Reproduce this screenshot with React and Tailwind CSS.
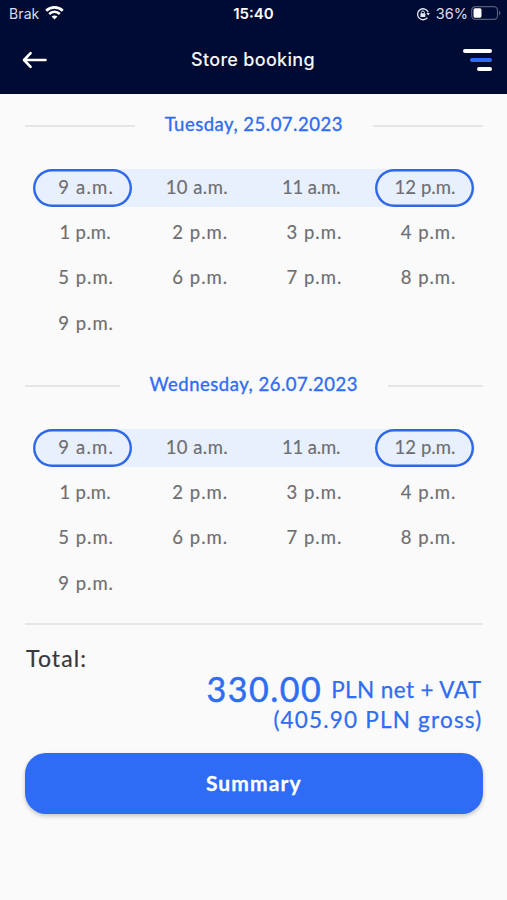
import React, { useState } from 'react';

const days = [
  { id: 'tue', label: 'Tuesday, 25.07.2023', labelClass: 'w-[178px]' },
  { id: 'wed', label: 'Wednesday, 26.07.2023', labelClass: 'w-[208px]' },
];

const slots = [
  ['9 a.m.', '10 a.m.', '11 a.m.', '12 p.m.'],
  ['1 p.m.', '2 p.m.', '3 p.m.', '4 p.m.'],
  ['5 p.m.', '6 p.m.', '7 p.m.', '8 p.m.'],
  ['9 p.m.'],
];

const slotTracking = {
  '9 a.m.': 'tracking-[1.2px] pr-[18px]',
  '10 a.m.': 'tracking-[0.45px] pr-[18px]',
  '11 a.m.': 'tracking-[-0.15px] pr-[20px]',
  '12 p.m.': 'tracking-[0.05px] pr-[19px]',
  '1 p.m.': 'tracking-[0.3px] pr-[21px]',
};

const StatusBar = () => (
  <div className="grid h-[28px] grid-cols-3 items-center px-[9px] font-['Inter',sans-serif] text-[14px] text-[#d9dded]">
    <div className="flex items-center gap-[6px]">
      <span className="-mt-[1px] tracking-[0.1px]">Brak</span>
      <svg className="-mt-[2px]" width="19" height="14" viewBox="0 0 19 14" fill="none" stroke="#fff">
        <path d="M1.2 4.7C5.8 0.3 13.2 0.3 17.8 4.7" strokeWidth="2.6" />
        <path d="M4.2 8C7.2 5.1 11.8 5.1 14.8 8" strokeWidth="2.5" />
        <path d="M9.5 13.6L6.6 10.6C8.2 9.2 10.8 9.2 12.4 10.6Z" fill="#fff" stroke="none" />
      </svg>
    </div>
    <span className="text-center text-[15px] font-semibold text-white">15:40</span>
    <div className="-mr-[3px] flex items-center justify-end">
      <svg className="mr-[6px]" width="14" height="14" viewBox="0 0 14 14" fill="none" stroke="#e5e8f2">
        <path d="M11.4 10.7A5.5 5.5 0 1 1 12.2 5.2" strokeWidth="1.3" />
        <path d="M10.4 6H14L12.2 8.6Z" fill="#e5e8f2" stroke="none" />
        <rect x="4.4" y="6.3" width="5" height="3.8" rx="0.6" fill="#e5e8f2" stroke="none" />
        <path d="M5.4 6.5V5.5A1.5 1.5 0 0 1 8.4 5.5V6.5" strokeWidth="1" />
      </svg>
      <span className="mr-[3px] text-[14.5px]">36%</span>
      <svg className="-mt-[2px]" width="30" height="14" viewBox="0 0 30 14" fill="none">
        <rect x="0.7" y="0.7" width="25.8" height="12.6" rx="3.6" stroke="#565d7c" strokeWidth="1.2" />
        <rect x="2.5" y="2.3" width="8" height="9.4" rx="1.6" fill="#fff" />
        <path d="M28 4.8C30 5.6 30 8.4 28 9.2Z" fill="#565d7c" />
      </svg>
    </div>
  </div>
);

const Header = () => (
  <header className="h-[94px] bg-[#000b33]">
    <StatusBar />
    <div className="flex h-[63px] items-center justify-between pr-[15px] pl-[22px]">
      <button aria-label="Back">
        <svg width="25" height="18" viewBox="0 0 25 18" fill="none" stroke="#fff" strokeWidth="2.6" strokeLinecap="round" strokeLinejoin="round">
          <path d="M8.6 2.2L2 9L8.6 15.8M2.2 9H23.5" />
        </svg>
      </button>
      <h1 className="-ml-[4px] font-['Inter',sans-serif] text-[18px] font-medium tracking-[0.3px] text-[#f3f5fc]">Store booking</h1>
      <button aria-label="Menu" className="flex w-[29px] flex-col items-end gap-[5px]">
        <span className="h-[4px] w-[29px] rounded-full bg-white" />
        <span className="h-[4px] w-[22px] rounded-full bg-[#2e6cf6]" />
        <span className="h-[4px] w-[15px] rounded-full bg-white" />
      </button>
    </div>
  </header>
);

const Slot = ({ label, selected, onClick }) => (
  <button
    onClick={onClick}
    className={`flex h-[38px] w-[99px] items-center justify-end rounded-full pb-[1px] text-[18.5px] whitespace-nowrap text-[#6e6e71] [-webkit-text-stroke:0.15px_#6e6e71]
      ${slotTracking[label] || 'tracking-[1px] pr-[18px]'}
      ${selected ? 'shadow-[inset_0_0_0_2.4px_#2e68e8]' : ''}`}
  >
    {label}
  </button>
);

const Day = ({ label, labelClass }) => {
  const [range, setRange] = useState(['9 a.m.', '12 p.m.']);

  const handleSelect = (slot) => {
    setRange(range.length === 2 ? [slot] : [...range, slot]);
  };

  return (
    <section className="h-[260px]">
      <div className="flex h-[30px] items-center gap-[30px]">
        <div className="h-[2px] flex-1 bg-[#e6e6e8]" />
        <h2 className={`${labelClass} flex justify-center pb-[2px] text-[18.5px] tracking-[0.5px] whitespace-nowrap text-[#2f6df2] [-webkit-text-stroke:0.35px_#2f6df2]`}>{label}</h2>
        <div className="h-[2px] flex-1 bg-[#e6e6e8]" />
      </div>
      <div className="mt-[28px] flex flex-col gap-[7.4px] px-[8px]">
        {slots.map((row, index) => (
          <div
            key={index}
            className={`flex justify-between rounded-full ${index === 0 ? 'bg-[#e8f0fe]' : ''}`}
          >
            {row.map((slot) => (
              <Slot key={slot} label={slot} selected={range.includes(slot)} onClick={() => handleSelect(slot)} />
            ))}
          </div>
        ))}
      </div>
    </section>
  );
};

const App = () => {
  return (
    <div className="min-h-screen bg-[#fafafa] font-['Lato',sans-serif]">
      <Header />
      <main className="pt-[17px] pr-[24.5px] pl-[25px]">
        {days.map((day) => (
          <Day key={day.id} label={day.label} labelClass={day.labelClass} />
        ))}

        <div className="mt-[-8px] h-[2px] bg-[#e6e6e8]" />

        {/* Total */}
        <div className="h-[128px] pt-[18px]">
          <p className="pl-[1px] text-[23px] leading-[30px] tracking-[1.1px] text-[#38383a] [-webkit-text-stroke:0.2px_#38383a]">Total:</p>
          <div className="text-[#2f6df2] [-webkit-text-stroke:0.25px_#2f6df2]">
            <div className="flex h-[32px] items-center justify-end gap-[9px] pr-[1px]">
              <span className="text-[34px] leading-[30px] tracking-[1.5px] [-webkit-text-stroke:0.5px_#2f6df2]">330.00</span>
              <span className="pt-[1px] text-[22.5px] leading-[26px] tracking-[0.4px]">PLN net + VAT</span>
            </div>
            <p className="text-right text-[22.5px] leading-[30px] tracking-[1.2px]">(405.90 PLN gross)</p>
          </div>
        </div>

        <button className="h-[61px] w-full rounded-[21px] bg-[#2e6cf6] pb-[1px] text-[21px] font-bold tracking-[1.1px] text-white shadow-[0_2px_4px_rgba(0,0,0,0.22)] [-webkit-text-stroke:0.3px_#fff]">
          Summary
        </button>
      </main>
    </div>
  );
};

export default App;
